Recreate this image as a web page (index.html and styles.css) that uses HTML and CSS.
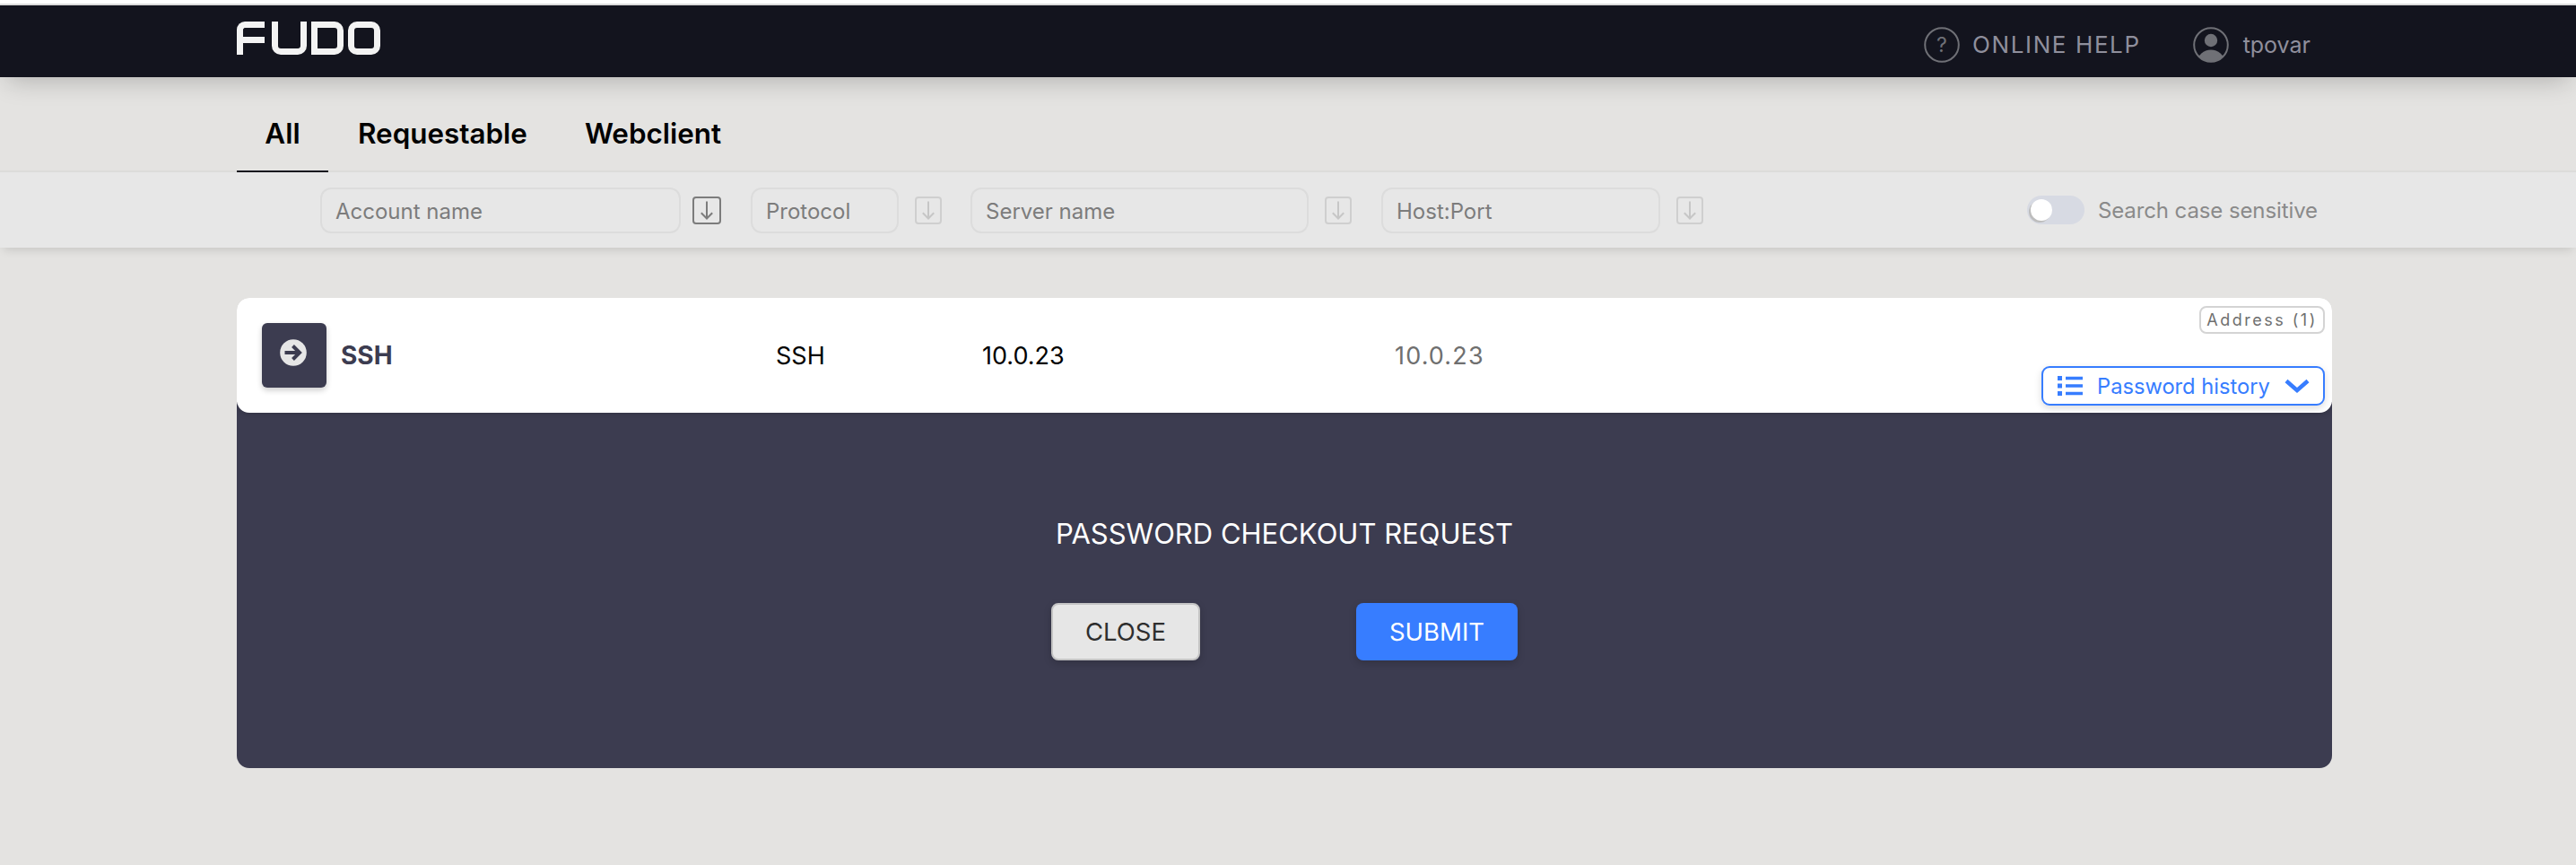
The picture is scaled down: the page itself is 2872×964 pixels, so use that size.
FILE: index.html
```html
<!DOCTYPE html>
<html lang="en">
<head>
<meta charset="utf-8">
<title>Fudo</title>
<link rel="stylesheet" href="styles.css">
</head>
<body>
<div class="top-strip"></div>
<header class="topbar">
  <div class="logo" role="img" aria-label="FUDO">
    <span class="lt lt-f"></span><span class="lt lt-u"></span><span class="lt lt-d"></span><span class="lt lt-o"></span>
  </div>
  <nav class="topnav">
    <a class="topitem help">
      <svg class="topicon" viewBox="0 0 40 40"><circle cx="20" cy="20" r="18.8" fill="none" stroke="#6f7076" stroke-width="2"/><text x="20" y="27.500" text-anchor="middle" class="qmark">?</text></svg>
      <span>ONLINE HELP</span>
    </a>
    <a class="topitem user">
      <svg class="topicon" viewBox="0 0 40 40"><defs><clipPath id="uc"><circle cx="20" cy="20" r="18.8"/></clipPath></defs><circle cx="20" cy="20" r="18.8" fill="none" stroke="#6f7076" stroke-width="2"/><circle cx="20" cy="15" r="7.200" fill="#6f7076"/><ellipse cx="20" cy="39" rx="15" ry="13.500" fill="#6f7076" clip-path="url(#uc)"/></svg>
      <span>tpovar</span>
    </a>
  </nav>
</header>
<div class="tabs">
  <a class="tab active">All</a>
  <a class="tab">Requestable</a>
  <a class="tab">Webclient</a>
</div>
<div class="filters">
  <div class="filter f-account"><input class="finput" placeholder="Account name"><button class="sort on"><svg viewBox="0 0 16 22"><path d="M8 1.500v19M1.800 14.200 8 20.500l6.200-6.300"/></svg></button></div>
  <div class="filter f-protocol"><input class="finput" placeholder="Protocol"><button class="sort"><svg viewBox="0 0 16 22"><path d="M8 1.500v19M1.800 14.200 8 20.500l6.200-6.300"/></svg></button></div>
  <div class="filter f-server"><input class="finput" placeholder="Server name"><button class="sort"><svg viewBox="0 0 16 22"><path d="M8 1.500v19M1.800 14.200 8 20.500l6.200-6.300"/></svg></button></div>
  <div class="filter f-host"><input class="finput" placeholder="Host:Port"><button class="sort"><svg viewBox="0 0 16 22"><path d="M8 1.500v19M1.800 14.200 8 20.500l6.200-6.300"/></svg></button></div>
  <label class="case"><span class="toggle"><span class="knob"></span></span><span>Search case sensitive</span></label>
</div>
<main class="content">
  <section class="card">
    <div class="row">
      <div class="c-name">
        <span class="proto-icon"><svg viewBox="0 0 30 30"><circle cx="15" cy="15" r="14.800" fill="#e6e6e6"/><path d="M5.500 15H22M14.500 7.500 22 15l-7.500 7.500" fill="none" stroke="#3c3c50" stroke-width="4"/></svg></span>
        <span class="acc">SSH</span>
      </div>
      <div class="c-proto">SSH</div>
      <div class="c-server">10.0.23</div>
      <div class="c-host">10.0.23</div>
      <div class="c-actions">
        <span class="badge">Address (1)</span>
        <button class="history">
          <svg class="list" viewBox="0 0 28 22"><path d="M0 0h5v5H0zM0 8.500h5v5H0zM0 17h5v5H0zM9 .8h19v3.400H9zM9 9.300h19v3.400H9zM9 17.800h19v3.400H9z"/></svg>
          <span class="history-label">Password history</span>
          <svg class="chev" viewBox="0 0 28 16"><path d="M2 2.500 14 13 26 2.500"/></svg>
        </button>
      </div>
    </div>
    <div class="panel">
      <h2 class="panel-title">PASSWORD CHECKOUT REQUEST</h2>
      <div class="panel-actions">
        <button class="btn btn-close">CLOSE</button>
        <button class="btn btn-submit">SUBMIT</button>
      </div>
    </div>
  </section>
</main>
</body>
</html>
```
FILE: styles.css
```css
* { box-sizing: border-box; }
html, body { margin: 0; padding: 0; }
body {
  width: 2872px;
  height: 964px;
  overflow: hidden;
  background: #e4e3e1;
  font-family: Inter, "Liberation Sans", sans-serif;
  color: #000;
}
.top-strip { height: 6px; background: linear-gradient(#fff 0 4px, #dedede 4px); }
.topbar {
  position: relative;
  z-index: 2;
  height: 80px;
  background: #13141e;
  display: flex;
  align-items: flex-start;
  justify-content: space-between;
  padding: 0 296px 0 264px;
  box-shadow: 0 12px 28px -8px rgba(0,0,0,.22);
}
.logo { display: flex; margin-top: 18px; height: 37px; }
.lt { display: block; height: 37px; border: 0 solid #f3f3f3; position: relative; }
.lt-f { width: 31px; border-left-width: 7px; border-top-width: 7px; border-top-left-radius: 9px; margin-right: 8px; }
.lt-f::after { content: ""; position: absolute; left: 0; top: 10px; width: 24px; height: 7px; background: #f3f3f3; }
.lt-u { width: 39px; border-width: 0 7px 7px; border-radius: 0 0 10px 10px; margin-right: 5px; }
.lt-d { width: 36px; border-width: 7px; border-radius: 0 10px 10px 0; margin-right: 5px; }
.lt-o { width: 36px; border-width: 7px; border-radius: 10px; }
.topnav { display: flex; align-items: center; height: 40px; margin-top: 24px; gap: 58px; }
.topitem { display: flex; align-items: center; color: #8f8f9c; font-size: 26px; line-height: 40px; }
.help { letter-spacing: 1.600px; gap: 14px; }
.user { gap: 16px; font-size: 25px; }
.topicon { width: 40px; height: 40px; display: block; }
.qmark { font-family: Inter, sans-serif; font-size: 23px; fill: #6f7076; letter-spacing: 0; }
.tabs {
  height: 106px;
  display: flex;
  padding-left: 264px;
  border-bottom: 2px solid #dcdcda;
}
.tab {
  height: 106px;
  padding: 45px 32px 0;
  font-size: 31.400px;
  line-height: 36px;
  font-weight: 600;
}
.tab.active { width: 102px; padding-left: 0; padding-right: 0; margin-right: 1px; text-align: center; border-bottom: 2px solid #13141e; }
.filters {
  height: 84px;
  background: #e7e7e7;
  display: flex;
  align-items: center;
  padding-left: 357px;
  box-shadow: 0 6px 10px -4px rgba(0,0,0,.14);
  position: relative;
}
.filter { display: flex; align-items: center; gap: 18px; }
.f-account { width: 480px; gap: 13px; }
.f-protocol { width: 245px; }
.f-server { width: 458px; }
.f-host { width: 362px; }
.finput {
  height: 51px;
  border: 2px solid #dcdcdc;
  border-radius: 12px;
  background: transparent;
  padding: 2px 15px 0;
  font: 400 24px Inter, sans-serif;
  color: #777;
  outline: none;
  flex: 0 0 auto;
}
.finput::placeholder { color: #7c7c7c; opacity: 1; }
.f-account .finput { width: 402px; }
.f-protocol .finput { width: 165px; }
.f-server .finput { width: 377px; }
.f-host .finput { width: 311px; }
.sort {
  width: 30px;
  height: 31px;
  padding: 0;
  background: transparent;
  border: 2px solid #cfcfcf;
  border-radius: 4px;
  display: flex;
  align-items: center;
  justify-content: center;
  flex: 0 0 auto;
}
.sort svg { width: 16px; height: 22px; fill: none; stroke: #c6c6c6; stroke-width: 2; }
.sort.on { width: 32px; border-color: #7c7c7c; }
.sort.on svg { stroke: #7c7c7c; }
.case {
  margin-left: auto;
  margin-right: 288px;
  display: flex;
  align-items: center;
  gap: 15px;
  font-size: 24px;
  letter-spacing: -.1px;
  color: #8a8a8a;
}
.toggle {
  width: 64px;
  height: 32px;
  border-radius: 16px;
  background: #d7dae3;
  display: block;
  position: relative;
}
.knob {
  position: absolute;
  left: 4px;
  top: 4px;
  width: 24px;
  height: 24px;
  border-radius: 50%;
  background: #fff;
  box-shadow: -2px 2px 0 #bdbdbd;
}
.content { padding: 56px 272px 0 264px; }
.card { border-radius: 14px; overflow: hidden; }
.row {
  height: 128px;
  background: #fff;
  border-radius: 14px;
  display: flex;
  align-items: center;
  position: relative;
  z-index: 1;
  box-shadow: 0 2px 6px rgba(0,0,0,.15);
  font-size: 27px;
}
.c-name { width: 601px; padding-left: 28px; display: flex; align-items: center; gap: 16px; }
.proto-icon {
  width: 72px;
  height: 72px;
  background: #3c3c50;
  border-radius: 6px;
  box-shadow: 0 3px 6px rgba(0,0,0,.2);
  display: flex;
  justify-content: center;
  padding-top: 18px;
  padding-right: 3px;
}
.proto-icon svg { width: 30px; height: 30px; display: block; }
.acc { font-size: 28px; font-weight: 700; color: #3c3c50; }
.c-proto { width: 230px; }
.c-server { width: 460px; }
.c-host { color: #6f6f6f; letter-spacing: 1.150px; }
.c-actions {
  margin-left: auto;
  margin-right: 8px;
  height: 128px;
  display: flex;
  flex-direction: column;
  align-items: flex-end;
  justify-content: flex-start;
  padding-top: 9px;
}
.badge {
  height: 31px;
  width: 140px;
  border: 2px solid #d4d4d4;
  border-radius: 8px;
  font-size: 18px;
  line-height: 27px;
  letter-spacing: 2.500px;
  color: #6f6f6f;
  text-align: center;
  white-space: nowrap;
}
.history {
  margin-top: 36px;
  height: 44px;
  width: 316px;
  border: 2px solid #377dff;
  border-radius: 9px;
  background: #fff;
  color: #377dff;
  padding: 0 16px;
  display: flex;
  align-items: center;
  gap: 16px;
  font: 400 23.700px Inter, sans-serif;
  box-shadow: 0 3px 8px rgba(0,0,0,.14);
}
.history-label { white-space: nowrap; flex: 1 1 auto; text-align: left; }
.list { width: 28px; height: 22px; fill: #377dff; flex: 0 0 auto; }
.chev { width: 28px; height: 16px; fill: none; stroke: #377dff; stroke-width: 4.500; flex: 0 0 auto; }
.panel {
  background: #3c3c50;
  height: 408px;
  margin-top: -12px;
  padding-top: 12px;
  display: flex;
  flex-direction: column;
  align-items: center;
}
.panel-title {
  margin: 115px 0 0;
  font-size: 31px;
  line-height: 40px;
  font-weight: 400;
  color: #fff;
}
.panel-actions { display: flex; gap: 174px; margin-top: 57px; }
.btn {
  height: 64px;
  border-radius: 8px;
  font: 400 27.500px Inter, sans-serif;
  box-shadow: 0 3px 8px rgba(0,0,0,.18);
}
.btn-close { width: 166px; background: #e6e6e6; border: 2px solid #c4c4c4; color: #2e2e2e; }
.btn-submit { width: 180px; background: #377dff; border: 0; color: #fff; }
```
